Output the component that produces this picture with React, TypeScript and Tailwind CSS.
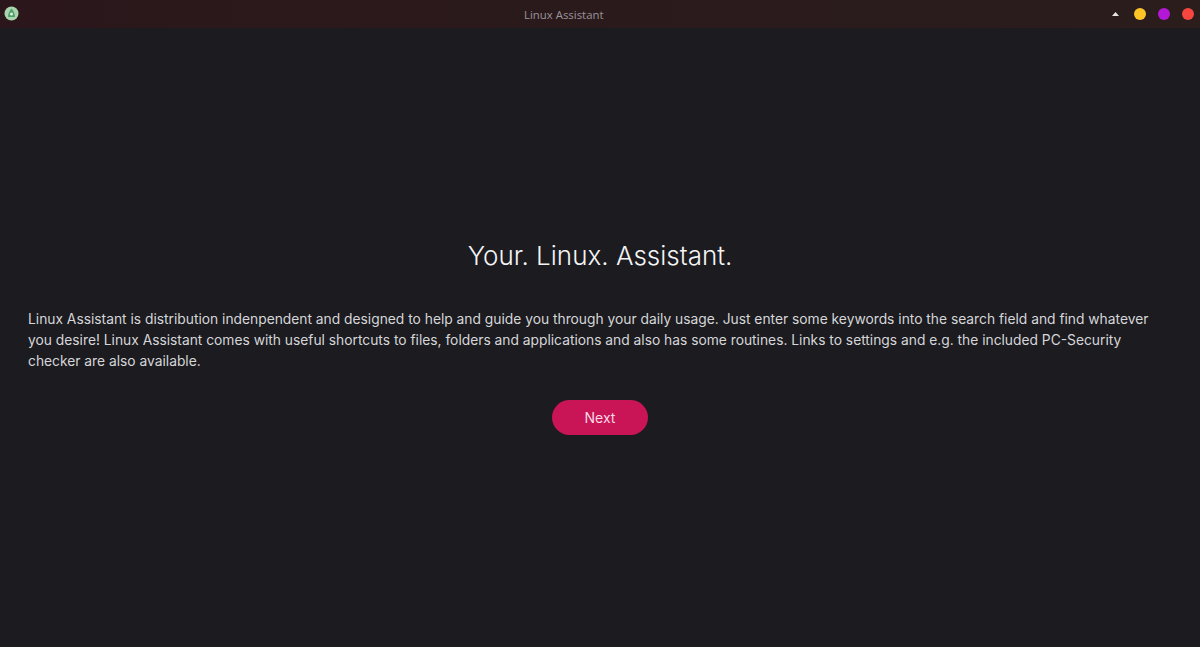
const App = () => {
  return (
    <div className="h-[647px] w-[1200px] overflow-hidden bg-[#1b1b20] font-['Inter',sans-serif] flex flex-col">
      {/* Title bar */}
      <div className="h-[28px] shrink-0 bg-gradient-to-r from-[#2b171b] to-[#2a1d1c] flex items-center pl-[4px] pr-[6px] relative">
        <svg width="15" height="15" viewBox="0 0 15 15" className="-mt-[1px]">
          <circle cx="7.5" cy="7.5" r="7" fill="#a9d4ad" />
          <path d="M7.5 2.5 C9.5 4.5 11 8 11 11 L4 11 C4 8 5.5 4.5 7.5 2.5Z" fill="#4f9e6b" />
          <circle cx="7.5" cy="8" r="1.6" fill="#d8f0dc" />
        </svg>
        <span className="absolute left-[524px] top-[8px] text-[11.4px] leading-[14px] text-[#99949a] font-['Open_Sans',sans-serif]">
          Linux Assistant
        </span>
        <div className="ml-auto flex items-center">
          <svg width="7" height="4" viewBox="0 0 7 4" className="mr-[15px]">
            <path d="M3.5 0 L7 4 L0 4 Z" fill="#e8e4e0" />
          </svg>
          <div className="w-[12px] h-[12px] rounded-full bg-[#fdc427]" />
          <div className="w-[12px] h-[12px] rounded-full bg-[#b517d6] ml-[12px]" />
          <div className="w-[12px] h-[12px] rounded-full bg-[#f7453f] ml-[12px]" />
        </div>
      </div>

      {/* Welcome content */}
      <div className="flex flex-col items-center px-[28px] pt-[211px]">
        <h1 className="text-[26px] leading-[34px] font-light text-[#f4f4f5]">Your. Linux. Assistant.</h1>
        <p className="mt-[36px] w-full text-[13.8px] leading-[21px] text-[#d6d6d8]">
          Linux Assistant is distribution indenpendent and designed to help and guide you through your daily usage. Just enter some keywords into the search field and find whatever you desire! Linux Assistant comes with useful shortcuts to files, folders and applications and also has some routines. Links to settings and e.g. the included PC-Security checker are also available.
        </p>
        <button className="mt-[28px] w-[96px] h-[35px] rounded-full bg-[#c91455] text-[14px] text-[#fbd9e6]">
          Next
        </button>
      </div>
    </div>
  );
};

export default App;
